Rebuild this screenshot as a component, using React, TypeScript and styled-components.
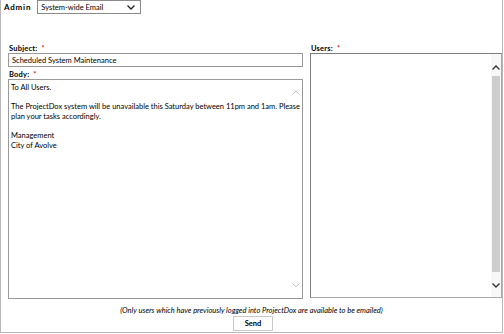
import React from "react";
import styled, { createGlobalStyle } from "styled-components";

const Global = createGlobalStyle`
  html, body { margin: 0; padding: 0; background: #fff; }
  body { font-family: Lato, "Open Sans", Arial, sans-serif; color: #000; }
  * { box-sizing: border-box; }
`;

const Frame = styled.div`
  width: 503px;
  height: 333px;
  border-left: 1px solid #b8b8b8;
  border-right: 1px solid #b8b8b8;
  border-bottom: 1px solid #b8b8b8;
  display: flex;
  flex-direction: column;
  font-size: 7.5px;
`;

const TopBar = styled.div`
  display: flex;
  align-items: center;
  gap: 6px;
  height: 14px;
  padding-left: 3px;
`;

const Bold = styled.span`
  font-weight: 700;
  font-size: 8px;
  letter-spacing: 0.8px;
`;

const Select = styled.div`
  width: 104px;
  height: 14px;
  border: 1px solid #8a8a8a;
  display: flex;
  align-items: center;
  justify-content: space-between;
  padding: 0 5px 0 3px;
  font-size: 7.5px;
`;

const Main = styled.div`
  display: flex;
  gap: 7px;
  padding-left: 7px;
  margin-top: 30px;
`;

const Column = styled.div<{ $w: number }>`
  width: ${(p) => p.$w}px;
  display: flex;
  flex-direction: column;
`;

const Label = styled.div<{ $mt?: number }>`
  font-weight: 700;
  font-size: 7.5px;
  height: 9px;
  line-height: 9px;
  margin-top: ${(p) => p.$mt ?? 0}px;
  display: flex;
  gap: 4px;
  padding-left: 1px;
  letter-spacing: 0.2px;
`;

const Req = styled.span`
  color: #e00000;
  font-weight: 400;
`;

const Input = styled.div`
  height: 14px;
  border: 1px solid #9a9a9a;
  display: flex;
  align-items: center;
  padding-left: 3px;
  font-size: 7.5px;
`;

const TextArea = styled.div`
  position: relative;
  height: 220px;
  border: 1px solid #9a9a9a;
  padding: 3px 4px 0 2px;
  font-size: 7.5px;
  line-height: 9.6px;
`;

const Para = styled.p`
  margin: 0 0 9.6px 0;
  white-space: nowrap;
`;

const Chev = styled.svg<{ $top?: number; $bottom?: number; $c: string; $r: number }>`
  position: absolute;
  right: ${(p) => p.$r}px;
  ${(p) => (p.$top !== undefined ? `top: ${p.$top}px;` : "")}
  ${(p) => (p.$bottom !== undefined ? `bottom: ${p.$bottom}px;` : "")}
  width: 8px;
  height: 5px;
  stroke: ${(p) => p.$c};
`;

const ListBox = styled.div`
  position: relative;
  height: 245px;
  border: 1px solid #7c7c7c;
  border-right-color: #a8a8a8;
  border-bottom-color: #a8a8a8;
`;

const ScrollTrack = styled.div`
  position: absolute;
  right: 0;
  top: 0;
  bottom: 0;
  width: 10px;
  display: flex;
  flex-direction: column;
  padding: 22px 1px 25px 1px;
  background: #f7f7f7;
`;

const Thumb = styled.div`
  flex: 1;
  background: #cdcdcd;
`;

const Footer = styled.div`
  display: flex;
  flex-direction: column;
  align-items: center;
  margin-top: 7px;
  gap: 1px;
`;

const Note = styled.div`
  font-style: italic;
  font-size: 7.5px;
  line-height: 9px;
`;

const Button = styled.div`
  width: 40px;
  height: 15px;
  border: 1px solid #c8c8c8;
  display: flex;
  align-items: center;
  justify-content: center;
  font-weight: 700;
  font-size: 7.5px;
  margin-left: 3px;
`;

const Up = (props: { c: string; r: number; top?: number; bottom?: number; w?: number }) => (
  <Chev viewBox="0 0 8 5" $c={props.c} $r={props.r} $top={props.top} $bottom={props.bottom} fill="none" strokeWidth={props.w ?? 1}>
    <polyline points="0.5,4.5 4,1 7.5,4.5" />
  </Chev>
);
const Down = (props: { c: string; r: number; top?: number; bottom?: number; w?: number }) => (
  <Chev viewBox="0 0 8 5" $c={props.c} $r={props.r} $top={props.top} $bottom={props.bottom} fill="none" strokeWidth={props.w ?? 1}>
    <polyline points="0.5,0.5 4,4 7.5,0.5" />
  </Chev>
);

export default function App() {
  return (
    <>
      <Global />
      <Frame>
        <TopBar>
          <Bold>Admin</Bold>
          <Select>
            <span>System-wide Email</span>
            <svg width="8" height="5" viewBox="0 0 8 5" fill="none" stroke="#222" strokeWidth="1.3">
              <polyline points="0.5,0.5 4,4 7.5,0.5" />
            </svg>
          </Select>
        </TopBar>
        <Main>
          <Column $w={295}>
            <Label>
              Subject: <Req>*</Req>
            </Label>
            <Input>Scheduled System Maintenance</Input>
            <Label $mt={3}>
              Body: <Req>*</Req>
            </Label>
            <TextArea>
              <Para>To All Users.</Para>
              <Para>
                The ProjectDox system will be unavailable this Saturday between 11pm and 1am. Please
                <br />
                plan your tasks accordingly.
              </Para>
              <Para>
                Management
                <br />
                City of Avolve
              </Para>
              <Up c="#c4c4c4" r={2} top={10} />
              <Down c="#c4c4c4" r={2} bottom={10} />
            </TextArea>
          </Column>
          <Column $w={192}>
            <Label>
              Users: <Req>*</Req>
            </Label>
            <ListBox>
              <ScrollTrack>
                <Thumb />
              </ScrollTrack>
              <Up c="#333" r={1} top={11} w={1.4} />
              <Down c="#333" r={1} bottom={9} w={1.4} />
            </ListBox>
          </Column>
        </Main>
        <Footer>
          <Note>(Only users which have previously logged into ProjectDox are available to be emailed)</Note>
          <Button>Send</Button>
        </Footer>
      </Frame>
    </>
  );
}
